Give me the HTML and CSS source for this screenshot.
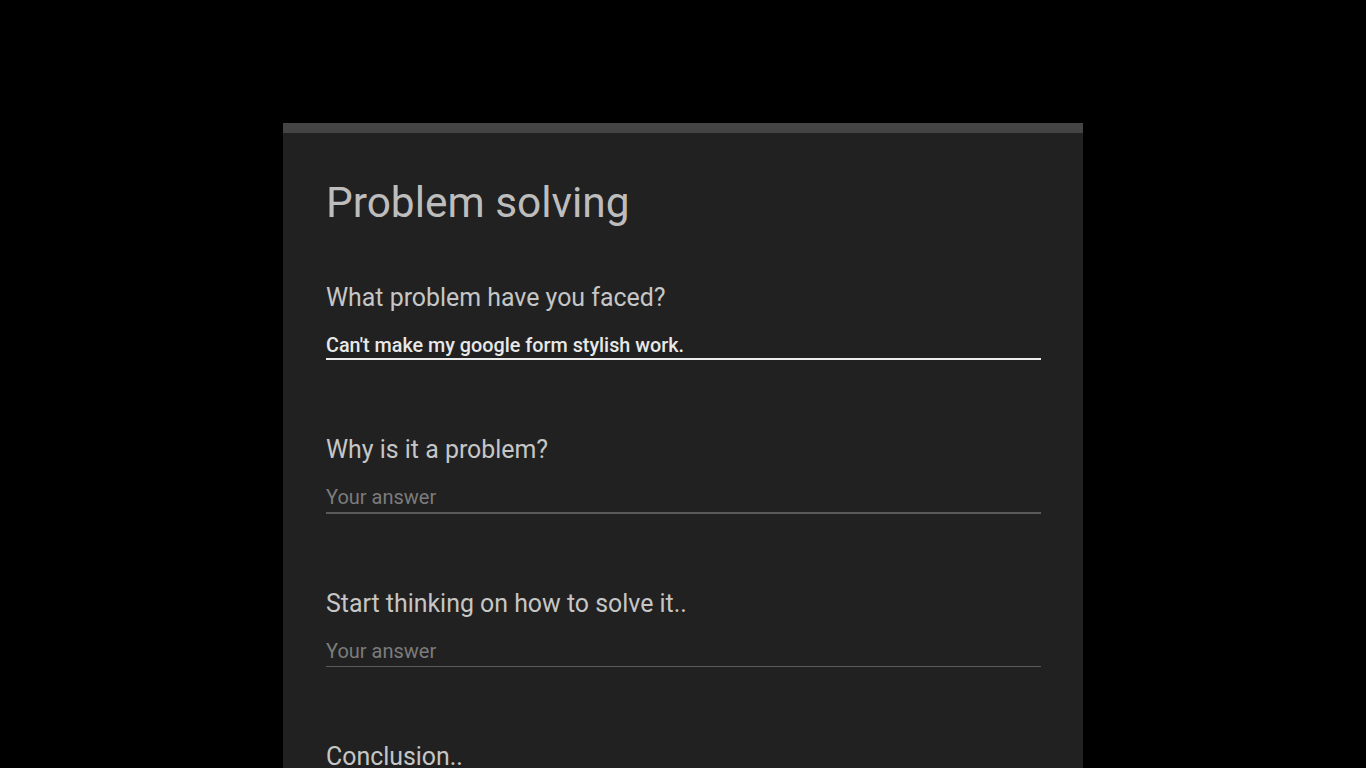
FILE: index.html
```html
<!DOCTYPE html>
<html lang="en">
<head>
<meta charset="utf-8">
<title>Problem solving</title>
<link rel="stylesheet" href="styles.css">
</head>
<body>
<main class="card">
  <h1 class="title">Problem solving</h1>
  <div class="question">
    <div class="label">What problem have you faced?</div>
    <div class="answer filled">Can't make my google form stylish work.</div>
  </div>
  <div class="question">
    <div class="label">Why is it a problem?</div>
    <div class="answer empty thick">Your answer</div>
  </div>
  <div class="question">
    <div class="label">Start thinking on how to solve it..</div>
    <div class="answer empty">Your answer</div>
  </div>
  <div class="question">
    <div class="label">Conclusion..</div>
    <div class="answer empty">Your answer</div>
  </div>
</main>
</body>
</html>
```

FILE: styles.css
```css
html, body {
  margin: 0;
  padding: 0;
  background: #000;
}
body {
  font-family: Roboto, "Liberation Sans", sans-serif;
  overflow: hidden;
  height: 768px;
}
.card {
  width: 800px;
  box-sizing: border-box;
  margin: 123px auto 0;
  border-top: 10px solid #444444;
  background: #212121;
  padding: 44px 42px 40px 43px;
  min-height: 700px;
}
.title {
  margin: 0;
  font-size: 42.4px;
  font-weight: 400;
  line-height: 52px;
  color: #bdbdbd;
}
.question {
  margin-top: 54px;
}
.question + .question {
  margin-top: 75px;
}
.label {
  font-size: 24.9px;
  line-height: 30px;
  color: #c6c6c6;
}
.answer {
  margin-top: 20px;
  font-size: 20px;
  line-height: 24px;
}
.filled {
  margin-top: 21px;
  font-size: 19.8px;
  color: #e8e8e8;
  font-weight: 500;
  border-bottom: 2px solid #ededed;
}
.empty {
  padding-bottom: 3px;
  color: #7c7c7c;
  border-bottom: 1px solid #5a5a5a;
}
.empty.thick {
  border-bottom-width: 2px;
}
```
